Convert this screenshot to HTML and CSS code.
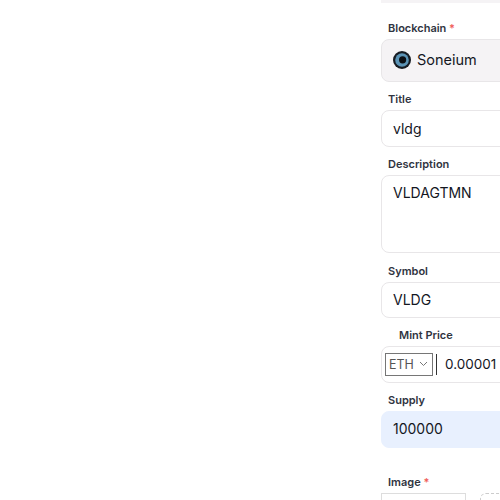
FILE: index.html
```html
<!DOCTYPE html>
<html lang="en">

<head>
    <meta charset="UTF-8">
    <title>Create collection</title>
    <link rel="stylesheet" href="styles.css">
</head>

<body>
    <form class="form">
        <div class="top-box"></div>

        <div class="field field-chain">
            <label class="lbl">Blockchain <span class="req">*</span></label>
            <div class="inp chain">
                <svg class="chain-icon" width="18" height="18" viewBox="0 0 18 18">
                    <circle cx="9" cy="9" r="9" fill="#161b22"/>
                    <circle cx="9" cy="9" r="6.8" fill="#5b93b5"/>
                    <circle cx="9.6" cy="8.8" r="3.6" fill="#0a0e13"/>
                </svg>
                <span>Soneium</span>
            </div>
        </div>

        <div class="field">
            <label class="lbl">Title</label>
            <div class="inp">vldg</div>
        </div>

        <div class="field">
            <label class="lbl">Description</label>
            <div class="inp area">VLDAGTMN</div>
        </div>

        <div class="field field-symbol">
            <label class="lbl">Symbol</label>
            <div class="inp symbol">VLDG</div>
        </div>

        <div class="field">
            <label class="lbl lbl-indent">Mint Price</label>
            <div class="inp price">
                <div class="select">
                    <span>ETH</span>
                    <svg width="9" height="6" viewBox="0 0 9 6"><path d="M1 1l3.5 3.5L8 1" fill="none" stroke="#777" stroke-width="1"/></svg>
                </div>
                <div class="sep"></div>
                <span>0.00001</span>
            </div>
        </div>

        <div class="field">
            <label class="lbl">Supply</label>
            <div class="inp filled">100000</div>
        </div>

        <div class="field field-image">
            <label class="lbl">Image <span class="req">*</span></label>
            <div class="image-row">
                <div class="image-btn"></div>
                <div class="image-drop"></div>
            </div>
        </div>
    </form>
</body>

</html>
```

FILE: styles.css
```css
body {
    margin: 0;
    height: 500px;
    overflow: hidden;
    background: #fff;
    font-family: Inter, "Open Sans", sans-serif;
    color: #14171f;
}

.form {
    width: 400px;
    height: 500px;
    margin-left: 381px;
    overflow: hidden;
}

.top-box {
    height: 3px;
    background: #f5f3f5;
}

.field {
    display: flex;
    flex-direction: column;
    margin-top: 9px;
}

.field-chain {
    margin-top: 17px;
}

.field-symbol {
    margin-top: 10px;
}

.field-image {
    margin-top: 26px;
}

.lbl {
    margin: 0 0 3px 7px;
    font-size: 11px;
    font-weight: 600;
    line-height: 16px;
    color: #30343f;
}

.lbl-indent {
    margin-left: 18px;
}

.req {
    color: #f0605a;
}

.inp {
    box-sizing: border-box;
    height: 37px;
    padding: 0 11px;
    border: 1px solid #e8e6e8;
    border-radius: 8px;
    display: flex;
    align-items: center;
    font-size: 14px;
    background: #fff;
}

.chain {
    height: 43px;
    padding-bottom: 2px;
    gap: 6px;
    background: #f5f3f5;
    font-size: 14.5px;
}

.area {
    height: 78px;
    align-items: flex-start;
    padding-top: 8px;
}

.symbol {
    height: 36px;
    padding-bottom: 2px;
}

.price {
    height: 37px;
    padding: 0 3px 1px;
    gap: 3px;
    font-size: 13.5px;
}

.select {
    box-sizing: border-box;
    width: 48px;
    height: 23px;
    padding: 0 4px 0 3px;
    border: 1px solid #767676;
    display: flex;
    align-items: center;
    justify-content: space-between;
    font-size: 12.5px;
    color: #555;
}

.sep {
    width: 1px;
    height: 21px;
    margin-right: 5px;
    background: #333;
}

.filled {
    padding-bottom: 2px;
    background: #e8f0fe;
    border-color: #e8f0fe;
}

.image-row {
    display: flex;
    gap: 14px;
}

.image-btn {
    width: 83px;
    height: 30px;
    border: 1px solid #ddd;
}

.image-drop {
    width: 60px;
    height: 30px;
    border: 1px dashed #ccc;
    border-radius: 6px;
}
```
